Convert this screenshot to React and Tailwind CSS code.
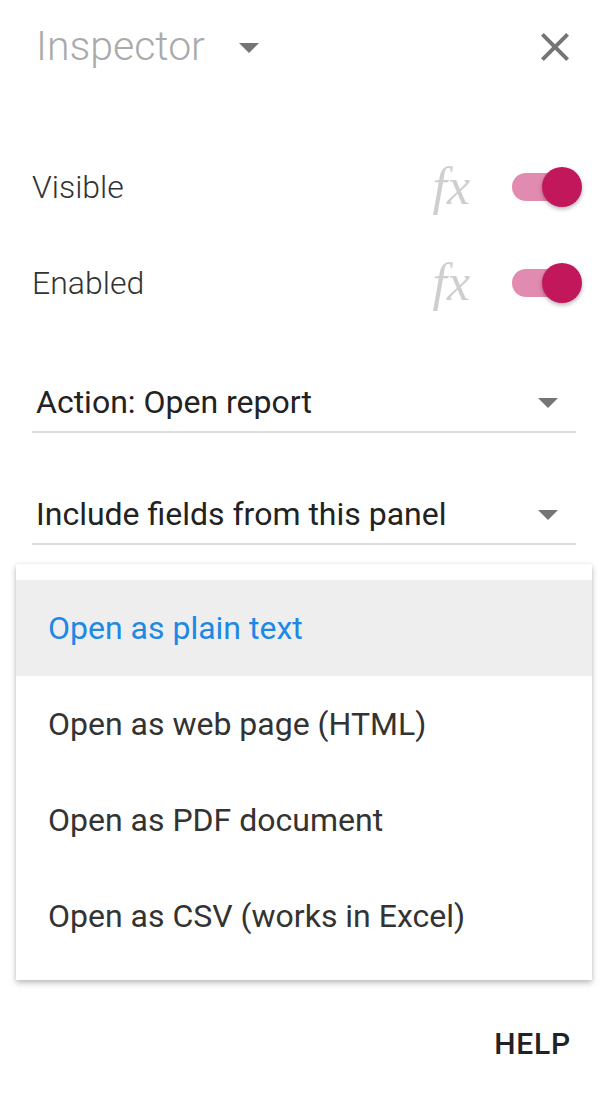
import React from 'react';

const font = { fontFamily: 'Roboto, "Noto Sans", sans-serif' };

const Caret = ({ className = '' }) => (
  <svg width="48" height="48" viewBox="0 0 24 24" className={className}>
    <path d="M7 10l5 5 5-5z" fill="#757575" />
  </svg>
);

const CloseIcon = () => (
  <svg width="48" height="48" viewBox="0 0 24 24">
    <path
      d="M19 6.41L17.59 5 12 10.59 6.41 5 5 6.41 10.59 12 5 17.59 6.41 19 12 13.41 17.59 19 19 17.59 13.41 12z"
      fill="#757575"
    />
  </svg>
);

const Toggle = () => (
  <div className="relative w-[70px] h-[40px] flex items-center">
    <div className="w-[68px] h-[28px] rounded-full bg-[#e28bb0]" />
    <div className="absolute right-0 top-0 w-[40px] h-[40px] rounded-full bg-[#c2185b] shadow-[0_2px_4px_rgba(0,0,0,0.3)]" />
  </div>
);

const SwitchRow = ({ label }) => (
  <div className="h-[96px] flex items-center pl-8 pr-[26px]">
    <span className="flex-1 text-[32px] font-light text-[#333]">{label}</span>
    <span
      className="text-[52px] italic text-[#cfcfcf] mr-[42px] leading-none"
      style={{ fontFamily: '"Liberation Serif", "DejaVu Serif", serif' }}
    >
      fx
    </span>
    <Toggle />
  </div>
);

const Select = ({ label, className = '' }) => (
  <div className={`mx-8 h-[60px] border-b-2 border-[#dedede] flex items-center pl-1 ${className}`}>
    <span className="flex-1 text-[32px] text-[#222]">{label}</span>
    <Caret className="mr-1" />
  </div>
);

const options = [
  'Open as plain text',
  'Open as web page (HTML)',
  'Open as PDF document',
  'Open as CSV (works in Excel)',
];

export default function App() {
  return (
    <div className="w-full h-[1103px] bg-white flex flex-col" style={font}>
      <div className="h-[94px] flex items-center pl-[36px] pr-[29px]">
        <span className="text-[41px] font-light text-[#aaaaaa]">Inspector</span>
        <Caret className="ml-[20px]" />
        <div className="flex-1" />
        <CloseIcon />
      </div>

      <div className="mt-[45px]">
        <SwitchRow label="Visible" />
        <SwitchRow label="Enabled" />
      </div>

      <Select label="Action: Open report" className="mt-[42px]" />
      <Select label="Include fields from this panel" className="mt-[52px]" />

      <div className="mt-[19px] mx-4 bg-white py-4 shadow-[0_3px_6px_rgba(0,0,0,0.25),0_0_3px_rgba(0,0,0,0.08)]">
        {options.map((opt, i) => (
          <div
            key={opt}
            className={`h-[96px] flex items-center px-8 text-[32px] ${
              i === 0 ? 'bg-[#eeeeee] text-[#1e88e5]' : 'text-[#333]'
            }`}
          >
            {opt}
          </div>
        ))}
      </div>

      <div className="mt-[41px] flex justify-end pr-[37px]">
        <span className="text-[30px] font-medium text-[#222] tracking-[0.8px]">HELP</span>
      </div>
    </div>
  );
}
